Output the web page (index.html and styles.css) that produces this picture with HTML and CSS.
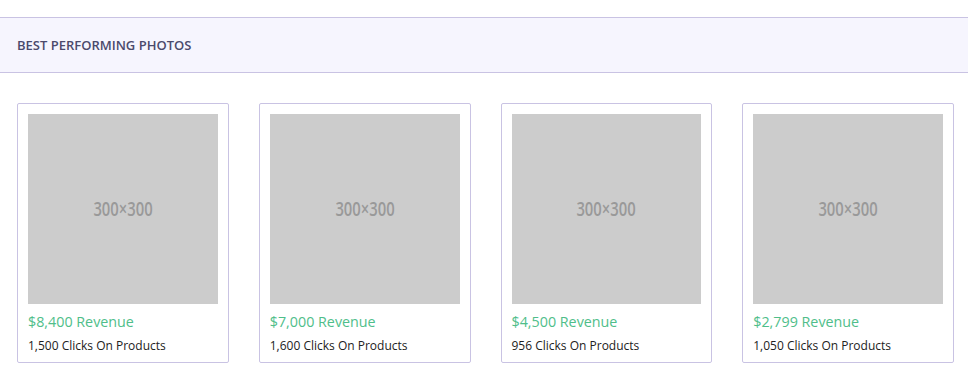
FILE: index.html
```html
<!DOCTYPE html>
<html lang="en">
<head>
    <meta charset="UTF-8">
    <meta name="viewport" content="width=device-width, initial-scale=1.0">
    <title>Best Performing Photos</title>
    <link rel="stylesheet" href="styles.css">
</head>
<body>
    <div class="panel">
        <div class="panel-header">
            <h2>Best Performing Photos</h2>
        </div>
        <div class="photo-grid">
            <div class="photo-card">
                <div class="photo"><span>300×300</span></div>
                <div class="revenue">$8,400 Revenue</div>
                <div class="clicks">1,500 Clicks On Products</div>
            </div>
            <div class="photo-card">
                <div class="photo"><span>300×300</span></div>
                <div class="revenue">$7,000 Revenue</div>
                <div class="clicks">1,600 Clicks On Products</div>
            </div>
            <div class="photo-card">
                <div class="photo"><span>300×300</span></div>
                <div class="revenue">$4,500 Revenue</div>
                <div class="clicks">956 Clicks On Products</div>
            </div>
            <div class="photo-card">
                <div class="photo"><span>300×300</span></div>
                <div class="revenue">$2,799 Revenue</div>
                <div class="clicks">1,050 Clicks On Products</div>
            </div>
        </div>
    </div>
</body>
</html>
```

FILE: styles.css
```css
body {
    margin: 0;
    padding-top: 17px;
    font-family: "Open Sans", Arial, sans-serif;
    background: #fff;
    color: #222;
}
.panel-header {
    background: #f6f5fe;
    border-top: 1px solid #c9c3e3;
    border-bottom: 1px solid #c9c3e3;
    height: 54px;
    display: flex;
    align-items: center;
    padding: 0 17px;
}
.panel-header h2 {
    margin: 0;
    font-size: 13px;
    font-weight: 600;
    text-transform: uppercase;
    color: #4b4a6c;
}
.photo-grid {
    display: grid;
    grid-template-columns: repeat(4, 1fr);
    gap: 30px;
    padding: 30px 14px 0 17px;
}
.photo-card {
    border: 1px solid #c9c3e3;
    border-radius: 2px;
    padding: 10px 10px 8px;
}
.photo {
    aspect-ratio: 1;
    background: #cccccc;
    display: flex;
    align-items: center;
    justify-content: center;
    color: #999;
    font-size: 20px;
    font-weight: 600;
}
.photo span {
    display: inline-block;
    transform: scaleX(0.74);
}
.revenue {
    margin-top: 8px;
    line-height: 20px;
    font-size: 14.3px;
    font-weight: 500;
    color: #4fbe8a;
}
.clicks {
    margin-top: 6px;
    line-height: 16px;
    font-size: 12px;
    color: #222;
}
```
